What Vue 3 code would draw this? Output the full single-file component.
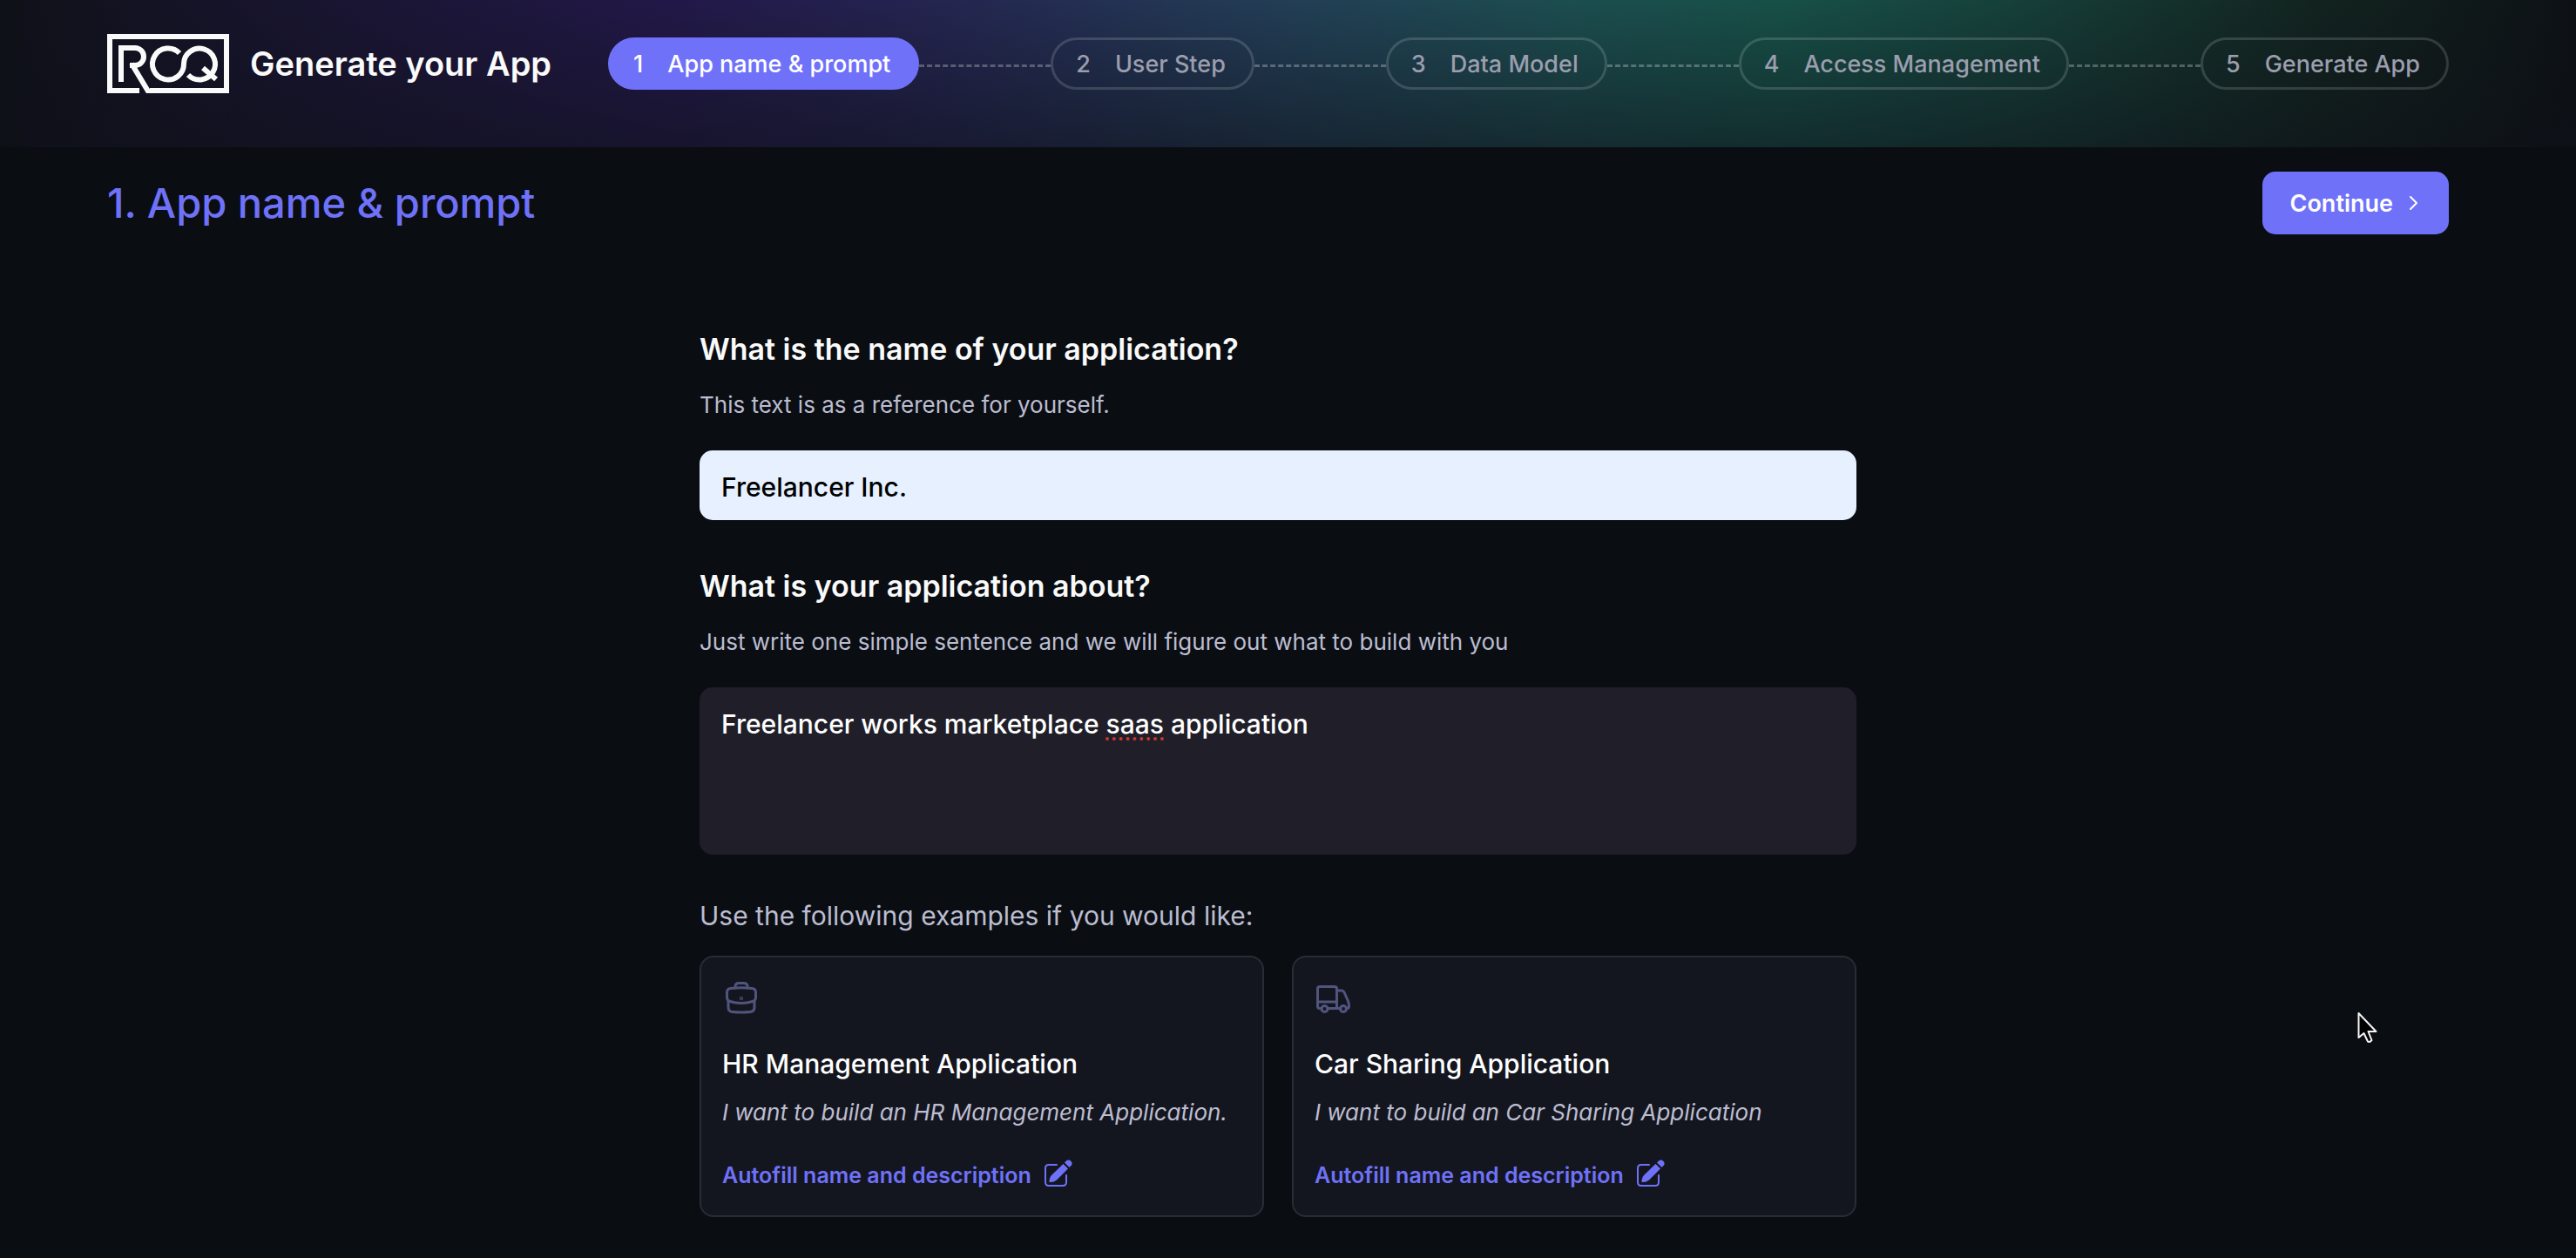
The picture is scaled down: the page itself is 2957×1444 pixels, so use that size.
<script setup>
import { ref } from 'vue'

const steps = ['App name & prompt', 'User Step', 'Data Model', 'Access Management', 'Generate App']
const current = ref(0)

const appName = ref('Freelancer Inc.')
const prompt = ref('Freelancer works marketplace saas application')

const examples = [
  {
    icon: 'briefcase',
    title: 'HR Management Application',
    text: 'I want to build an HR Management Application.'
  },
  {
    icon: 'truck',
    title: 'Car Sharing Application',
    text: 'I want to build an Car Sharing Application'
  }
]

function autofill(example) {
  appName.value = example.title
  prompt.value = example.text
}
</script>

<template>
  <div class="page">
    <header class="topbar">
      <svg class="logo" viewBox="0 0 140 68" role="img" aria-label="ROQ">
        <g fill="none" stroke="#fafafa" stroke-width="6">
          <path d="M49 65H137V3H3V65H37" />
          <path d="M28 34L49 69" />
          <path d="M16 55V16H32A9 9 0 0 1 32 36H26" />
          <path d="M83 22A18 18 0 1 0 88 34A18 18 0 1 1 93 47" />
          <path d="M110 39L125 52" />
        </g>
      </svg>
      <p class="brand">Generate your App</p>
      <nav class="stepper" aria-label="Progress">
        <template v-for="(step, i) in steps" :key="step">
          <span v-if="i > 0" class="connector"></span>
          <button type="button" class="step" :class="{ active: i === current }" @click="current = i">
            <span>{{ i + 1 }}</span>
            <span>{{ step }}</span>
          </button>
        </template>
      </nav>
    </header>

    <main class="content">
      <div class="page-head">
        <h1>1. App name &amp; prompt</h1>
        <button type="button" class="continue">
          Continue
          <svg width="12" height="20" viewBox="0 0 12 20" aria-hidden="true">
            <path d="M2 3L9 10L2 17" fill="none" stroke="currentColor" stroke-width="2" stroke-linecap="round" stroke-linejoin="round" />
          </svg>
        </button>
      </div>

      <form class="form" @submit.prevent>
        <label class="question" for="app-name">What is the name of your application?</label>
        <p class="hint">This text is as a reference for yourself.</p>
        <input id="app-name" v-model="appName" class="field" type="text" />

        <label class="question second" for="app-about">What is your application about?</label>
        <p class="hint">Just write one simple sentence and we will figure out what to build with you</p>
        <div class="prompt">
          <textarea id="app-about" v-model="prompt" class="field area" spellcheck="false"></textarea>
          <div class="marks" aria-hidden="true">
            <template v-for="(word, i) in prompt.split(' ')" :key="i"><span :class="{ typo: word === 'saas' }">{{ word }}</span>{{ ' ' }}</template>
          </div>
        </div>

        <p class="lead">Use the following examples if you would like:</p>
        <div class="cards">
          <article v-for="example in examples" :key="example.title" class="card">
            <svg v-if="example.icon === 'briefcase'" class="card-icon" viewBox="0 0 44 44" aria-hidden="true">
              <path d="M15 11V9.500Q15 5.500 19 5.500H25Q29 5.500 29 9.500V11" />
              <path d="M10 11.500Q22 10 34 11.500Q38.500 12 38.500 16V22Q38.500 25.500 35 26.500Q22 30.500 9 26.500Q5.500 25.500 5.500 22V16Q5.500 12 10 11.500Z" />
              <path d="M7 26V33Q7 38 11.500 38.500Q22 39.500 32.500 38.500Q37 38 37 33V26" />
              <circle cx="22" cy="23" r="0.6" />
            </svg>
            <svg v-else class="card-icon" viewBox="0 0 44 44" aria-hidden="true">
              <path d="M8 34.500H6Q3.500 34.500 3.500 32V12Q3.500 9.500 6 9.500H23Q25.500 9.500 25.500 12V34.500H15" />
              <path d="M3.500 27H25.500" />
              <path d="M25.500 14H31Q33 14 34 16L38 25Q39.500 28 39.500 32Q39.500 34.500 37 34.500M30 34.500H25.500" />
              <circle cx="11.500" cy="35" r="3.500" />
              <circle cx="33" cy="35" r="3.500" />
            </svg>
            <h2>{{ example.title }}</h2>
            <p class="card-text">{{ example.text }}</p>
            <button type="button" class="autofill" @click="autofill(example)">
              Autofill name and description
              <svg width="34" height="34" viewBox="0 0 34 34" aria-hidden="true">
                <path d="M15 7H6Q2 7 2 11V27Q2 31 6 31H22Q26 31 26 27V19" fill="none" stroke="currentColor" stroke-width="2" stroke-linecap="round" />
                <path d="M22.500 6L28 11.500L15 24.500Q11 27.500 6.500 27Q6.300 22 9.500 18.500Z" fill="currentColor" />
                <path d="M24 4.500L26.500 2Q29 0.500 31.300 2.700Q33.500 5 32 7.500L29.500 10Z" fill="currentColor" />
              </svg>
            </button>
          </article>
        </div>
      </form>
    </main>

    <svg class="cursor" viewBox="0 0 24 38" aria-hidden="true">
      <path d="M1.500 2V30L7.500 25L12 34.500Q14 36 16.500 33L12.500 23H21.500Z" fill="#000" stroke="#f4f4f4" stroke-width="2" stroke-linejoin="round" />
    </svg>
  </div>
</template>

<style>
body {
  margin: 0;
  background: #0a0e13;
}
</style>

<style scoped>
.page {
  position: relative;
  min-height: 100vh;
  background: #0a0e13;
  color: #fafafa;
  font-family: Inter, "Liberation Sans", sans-serif;
}

h1,
h2,
p {
  margin: 0;
}

button,
input,
textarea {
  font-family: inherit;
}

.topbar {
  display: flex;
  align-items: center;
  padding: 39px 146px 62px 123px;
  background:
    linear-gradient(to bottom, rgba(14, 16, 24, 0), rgba(14, 16, 24, 0.55)),
    linear-gradient(to right, #0f1118, #17142c 10%, #221848 26%, #242450 36%, #223e55 50%, #1c4d4f 61%, #175047 69%, #16403a 78%, #12231f 90%, #0d1115);
}

.logo {
  flex: none;
  width: 140px;
  height: 68px;
}

.brand {
  flex: none;
  margin: 0 65px 0 24px;
  font-size: 38px;
  font-weight: 600;
  line-height: 68px;
}

.stepper {
  display: flex;
  flex: 1;
  align-items: center;
}

.step {
  display: flex;
  align-items: center;
  gap: 28px;
  height: 60px;
  padding: 0 30px 0 26px;
  border: 3px solid rgba(255, 255, 255, 0.15);
  border-radius: 30px;
  background: transparent;
  color: #9b9eae;
  font-size: 27px;
  font-weight: 500;
  white-space: nowrap;
}

.step.active {
  border-color: #6f72f9;
  background: #6f72f9;
  color: #fff;
}

.connector {
  flex: 1;
  margin-top: 4px;
  border-top: 3px dashed rgba(255, 255, 255, 0.27);
}

.content {
  padding: 28px 146px 47px 123px;
}

.page-head {
  display: flex;
  align-items: center;
  justify-content: space-between;
}

h1 {
  color: #6f72f9;
  font-size: 47px;
  font-weight: 500;
  line-height: 72px;
}

.continue {
  display: flex;
  align-items: center;
  gap: 18px;
  height: 72px;
  padding: 0 34px 0 32px;
  border: 0;
  border-radius: 15px;
  background: #6f72f9;
  color: #fff;
  font-size: 27px;
  font-weight: 600;
}

.form {
  max-width: 1328px;
  margin: 108px auto 0;
}

.question {
  display: block;
  font-size: 34px;
  font-weight: 600;
  line-height: 48px;
}

.second {
  margin-top: 52px;
}

.hint {
  margin: 20px 0 32px;
  color: #bcbdd0;
  font-size: 26px;
  line-height: 40px;
}

.field {
  display: block;
  box-sizing: border-box;
  width: 100%;
  height: 80px;
  padding: 20px 25px 16px;
  border: 0;
  border-radius: 15px;
  outline: 0;
  background: #e6f0ff;
  color: #000;
  font-size: 30px;
  font-weight: 500;
  line-height: 44px;
}

.area {
  height: 192px;
  background: #201f29;
  color: #fff;
  resize: none;
}

.prompt {
  position: relative;
}

.marks {
  position: absolute;
  inset: 0;
  padding: 20px 25px 16px;
  color: transparent;
  font-size: 30px;
  font-weight: 500;
  line-height: 44px;
  pointer-events: none;
}

.typo {
  text-decoration: underline dotted #c8372f 4px;
  text-underline-offset: 4px;
}

.lead {
  margin: 48px 0 24px;
  color: #bcbdd0;
  font-size: 30px;
  line-height: 44px;
}

.cards {
  display: grid;
  grid-template-columns: 1fr 1fr;
  gap: 32px;
}

.card {
  padding: 24px 24px 26px;
  border: 2px solid #2a2c34;
  border-radius: 16px;
  background: #14161f;
}

.card-icon {
  display: block;
  width: 44px;
  height: 44px;
  fill: none;
  stroke: #51547c;
  stroke-width: 3;
  stroke-linecap: round;
  stroke-linejoin: round;
}

h2 {
  margin: 32px 0 14px;
  color: #fff;
  font-size: 30px;
  font-weight: 500;
  line-height: 44px;
}

.card-text {
  color: #bcbdd0;
  font-size: 26px;
  font-style: italic;
  line-height: 40px;
}

.autofill {
  display: flex;
  align-items: center;
  gap: 14px;
  height: 40px;
  margin-top: 32px;
  padding: 0;
  border: 0;
  background: transparent;
  color: #6f72f9;
  font-size: 25px;
  font-weight: 600;
}

.autofill svg {
  margin-bottom: 4px;
}

.cursor {
  position: absolute;
  top: 1161px;
  right: 227px;
  width: 24px;
  height: 38px;
}
</style>
